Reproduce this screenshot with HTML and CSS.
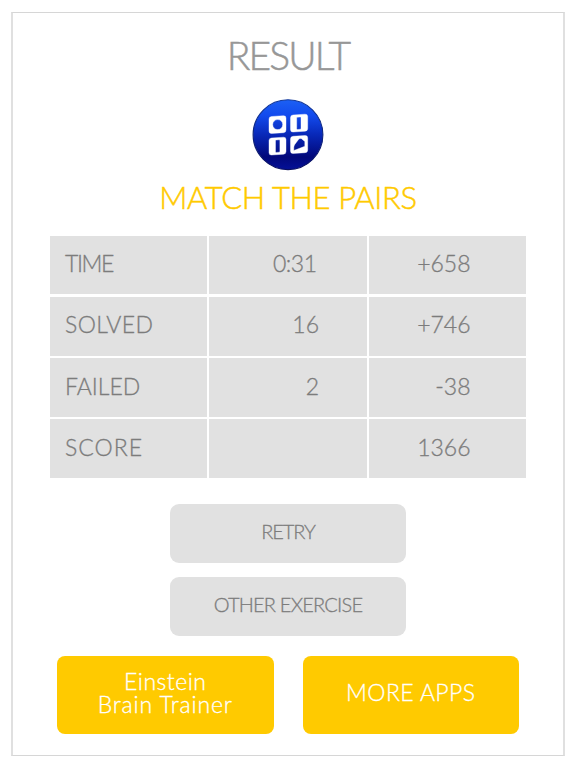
FILE: index.html
```html
<!DOCTYPE html>
<html lang="en">
<head>
<meta charset="utf-8">
<title>Result</title>
<link rel="stylesheet" href="styles.css">
</head>
<body>
<main class="card">
  <h1 class="title">RESULT</h1>
  <svg class="badge" viewBox="0 0 72 72" aria-hidden="true">
    <defs>
      <linearGradient id="ball" x1="0" y1="0" x2="0" y2="1">
        <stop offset="0" stop-color="#1c60f4"/>
        <stop offset=".22" stop-color="#124bee"/>
        <stop offset=".5" stop-color="#0828b8"/>
        <stop offset=".82" stop-color="#02087a"/>
        <stop offset="1" stop-color="#041098"/>
      </linearGradient>
      <linearGradient id="rim" x1="0" y1="0" x2="0" y2="1">
        <stop offset="0" stop-color="#12399c"/>
        <stop offset="1" stop-color="#0a1060"/>
      </linearGradient>
    </defs>
    <circle cx="36" cy="35.7" r="34.9" fill="url(#ball)" stroke="url(#rim)" stroke-width="1.1"/>
    <g fill="#fff" fill-rule="evenodd" stroke="#fff" stroke-width=".4">
      <path d="M19.500 17.500L31.500 16.700Q34 16.600 34 19V31Q34 33.500 31.500 33.700L19.500 34.500Q17 34.600 17 32.200V20Q17 17.700 19.500 17.500ZM25.700 20.600A5 5 0 1 0 25.700 30.600A5 5 0 1 0 25.700 20.600Z"/>
      <path d="M41 16L53 15.200Q55.700 15.100 55.700 17.500V29.500Q55.700 32 53 32.200L41 33Q38.500 33.100 38.500 30.700V18.500Q38.500 16.200 41 16ZM45 18.300Q44.700 18.300 44.700 18.900V29.800Q44.700 30.600 45.500 30.500L48.300 30.200Q49 30.100 49 29.300V18.600Q49 17.800 48.200 17.900Z"/>
      <path d="M19.500 39L31.500 38.200Q34 38.100 34 40.500V52.500Q34 55 31.500 55.200L19.500 56Q17 56.100 17 53.700V41.500Q17 39.200 19.500 39ZM24.200 41Q23.500 41 23.500 41.800V52.700Q23.500 53.500 24.300 53.400L27.100 53.200Q27.900 53.100 27.900 52.300V41.500Q27.900 40.700 27.100 40.800Z"/>
      <path d="M41 37.300L53 36.500Q55.700 36.400 55.700 38.800V51Q55.700 53.500 53 53.700L41 54.500Q38.500 54.600 38.500 52.200V39.800Q38.500 37.500 41 37.300ZM46.500 40.500L42.800 45.400Q41.800 46.800 41.800 48.500V51.500L52.800 47.300V42.500L49.500 39.700Q47.700 38.900 46.500 40.500Z"/>
    </g>
  </svg>
  <h2 class="exercise">MATCH THE PAIRS</h2>

  <div class="scores">
    <div class="cell label time">TIME</div><div class="cell value clock">0:31</div><div class="cell points">+658</div>
    <div class="cell label solved">SOLVED</div><div class="cell value">16</div><div class="cell points">+746</div>
    <div class="cell label">FAILED</div><div class="cell value">2</div><div class="cell points">-38</div>
    <div class="cell label total">SCORE</div><div class="cell value"></div><div class="cell points">1366</div>
  </div>

  <div class="actions">
    <button class="action">RETRY</button>
    <button class="action other">OTHER EXERCISE</button>
  </div>
  <div class="promos">
    <button class="promo"><span class="einstein">Einstein</span><span class="trainer">Brain Trainer</span></button>
    <button class="promo more">MORE APPS</button>
  </div>
</main>
</body>
</html>
```
FILE: styles.css
```css
* { box-sizing: border-box; }

body {
  margin: 0;
  padding: 12px 11px;
  height: 768px;
  background: #fff;
  color: #7c7c7c;
  font-family: Lato, "Liberation Sans", sans-serif;
  font-weight: 300;
}

.card {
  height: 744px;
  padding: 14px 37px 0;
  border: 1px solid #d6d6d6;
  border-width: 1px 2px;
  border-left-color: #e0e0e0;
  border-right-color: #e0e0e0;
  display: flex;
  flex-direction: column;
  align-items: center;
}

.title, .exercise { margin: 0; font-weight: 300; white-space: nowrap; }

.title {
  font-size: 39px;
  line-height: 56px;
  letter-spacing: -1.9px;
  color: #979797;
  -webkit-text-stroke: .5px #979797;
}

.badge { width: 72px; height: 72px; margin-top: 15.5px; }

.exercise {
  margin-top: 6px;
  font-size: 31px;
  line-height: 40px;
  letter-spacing: -.35px;
  color: #ffca00;
  -webkit-text-stroke: .5px #ffca00;
}

.scores {
  width: 476px;
  margin-top: 19px;
  display: grid;
  grid-template-columns: repeat(3, 1fr);
  grid-auto-rows: 58.9px;
  gap: 2.4px;
}

.cell {
  display: flex;
  align-items: center;
  padding-bottom: 4px;
  background: #e1e1e1;
  font-size: 23px;
  -webkit-text-stroke: .3px #7c7c7c;
}

.label { padding-left: 15px; }
.value { justify-content: flex-end; padding-right: 47.5px; }
.points { justify-content: flex-end; padding-right: 55.5px; }
.time { letter-spacing: -1.4px; }
.solved { letter-spacing: .4px; }
.total { letter-spacing: 1px; }
.clock { padding-right: 50px; letter-spacing: -.5px; }

.actions {
  margin-top: 25.500px;
  display: flex;
  flex-direction: column;
  gap: 14px;
}

button {
  border: 0;
  font: inherit;
  color: inherit;
}

.action {
  width: 236px;
  height: 59px;
  padding: 0 0 4px;
  border-radius: 9px;
  background: #e1e1e1;
  font-size: 20px;
  letter-spacing: -1.1px;
  -webkit-text-stroke: .3px #7c7c7c;
}

.other { letter-spacing: -.8px; }

.promos {
  margin-top: 20px;
  display: flex;
  gap: 29px;
}

.promo {
  width: 216.500px;
  height: 78px;
  padding: 0 0 4px;
  border-radius: 8px;
  background: #ffca00;
  color: #fff;
  font-size: 23px;
  line-height: 23px;
  display: flex;
  flex-direction: column;
  align-items: center;
  justify-content: center;
  -webkit-text-stroke: .3px #fff;
}

.einstein { letter-spacing: .5px; }
.trainer { letter-spacing: .85px; }
.more { letter-spacing: .4px; }
```
